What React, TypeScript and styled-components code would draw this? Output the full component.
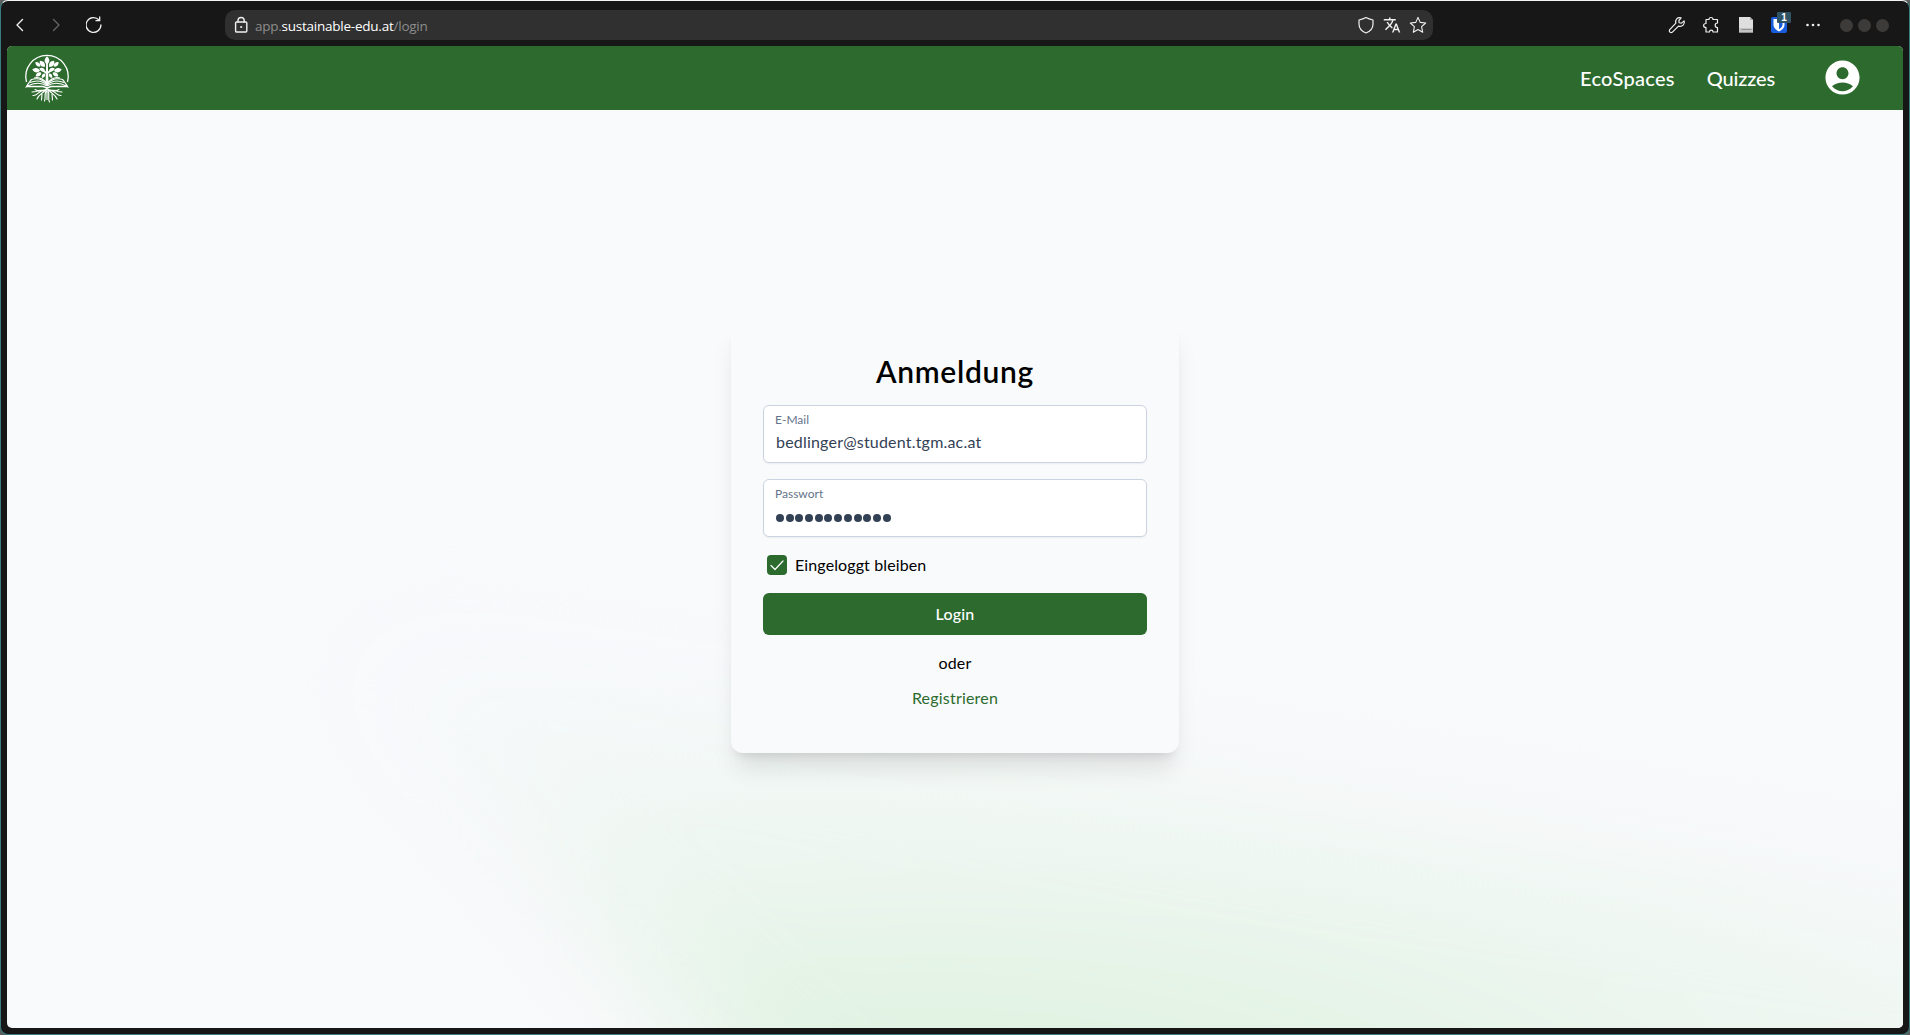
import React from 'react';
import styled, { createGlobalStyle } from 'styled-components';
import { MdAccountCircle, MdTranslate } from 'react-icons/md';

const green = '#2c6a2e';

const GlobalStyle = createGlobalStyle`
  *, *::before, *::after { box-sizing: border-box; }
  html, body, #root { height: 100%; }
  body { margin: 0; background: #5b5f5e; overflow: hidden; font-family: Lato, 'Open Sans', sans-serif; }
  svg { display: block; flex: none; }
`;

const BrowserWindow = styled.div`
  height: 100vh;
  display: flex;
  flex-direction: column;
  padding: 0 6px 6px;
  background: #171717;
  border: 1px solid #3b7d7e;
  border-top-color: #f4f6f6;
  border-radius: 8px;
`;

const Toolbar = styled.div`
  height: 45px;
  flex: none;
  display: flex;
  align-items: center;
  padding: 3px 14px 0 7px;
  color: #f0f0f0;
`;

const NavButtons = styled.div`
  width: 211px;
  display: flex;
  align-items: center;
  gap: 20px;
`;

const AddressBar = styled.div`
  width: 1208px;
  height: 30px;
  display: flex;
  align-items: center;
  padding: 0 6px 0 8px;
  border-radius: 10px;
  background: #303030;
`;

const Url = styled.div`
  flex: 1;
  margin-left: 6px;
  padding-top: 2px;
  font: 13.5px/20px 'Open Sans', 'Noto Sans', sans-serif;
  letter-spacing: -0.24px;
  color: #8d8d8d;
  b { font-weight: 400; color: #fff; }
`;

const AddressActions = styled.div`
  display: flex;
  gap: 8px;
`;

const Extensions = styled.div`
  margin-left: auto;
  display: flex;
  align-items: center;
  gap: 16px;
`;

const VaultIcon = styled.div`
  position: relative;
`;

const Badge = styled.span`
  position: absolute;
  left: 7px;
  top: -4px;
  width: 14px;
  height: 11px;
  background: #2f5365;
  border-radius: 1px;
  color: #fff;
  font: 700 10px/11px 'Liberation Sans', sans-serif;
  text-align: center;
`;

const WindowControls = styled.div`
  display: flex;
  gap: 5px;
  margin-left: 2px;
  padding-top: 1px;
`;

const Control = styled.span`
  width: 13px;
  height: 13px;
  border-radius: 50%;
  background: #3d3b39;
`;

const Page = styled.div`
  position: relative;
  flex: 1;
  min-height: 0;
  display: flex;
  flex-direction: column;
  overflow: hidden;
  border-radius: 5px;
  background: #f9fafc;
`;

const Header = styled.header`
  height: 64px;
  flex: none;
  display: flex;
  align-items: center;
  justify-content: space-between;
  padding: 0 40px 2px 16px;
  background: ${green};
  color: #fff;
`;

const Menu = styled.nav`
  display: flex;
  align-items: center;
`;

const MenuLink = styled.a<{ $spacing: string; $gap: number }>`
  font-size: 20px;
  line-height: 28px;
  font-weight: 500;
  letter-spacing: ${p => p.$spacing};
  margin-right: ${p => p.$gap}px;
  padding-top: 2px;
`;

const Glow = styled.div`
  position: absolute;
  inset: 0;
  filter: blur(56px);
  pointer-events: none;
  &::before {
    content: '';
    position: absolute;
    left: 0;
    top: 500px;
    width: 2100px;
    height: 700px;
    clip-path: polygon(340px 110px, 510px 120px, 2100px 380px, 2100px 700px, 870px 700px);
    background: radial-gradient(ellipse 1650px 520px at 930px 590px, #d9f0da 0%, #e3f3e5 26%, #f0f7f3 62%, #f5f9fa 90%);
  }
`;

const Main = styled.main`
  position: relative;
  flex: 1;
  display: flex;
  justify-content: center;
  align-items: flex-start;
  padding-top: 210px;
`;

const Card = styled.form`
  width: 448px;
  height: 433px;
  display: flex;
  flex-direction: column;
  padding: 31px 32px 32px;
  border-radius: 12px;
  background: #f9fafc;
  box-shadow: 0 20px 25px -5px rgba(0, 0, 0, 0.1), 0 8px 10px -6px rgba(0, 0, 0, 0.1);
`;

const Title = styled.h1`
  margin: 0 0 14px;
  font-size: 30px;
  line-height: 40px;
  font-weight: 600;
  letter-spacing: 0.7px;
  text-align: center;
  color: #000;
`;

const Field = styled.label`
  height: 58px;
  margin-bottom: 16px;
  padding: 6px 11px 0;
  display: flex;
  flex-direction: column;
  border: 1px solid #cbd5e1;
  border-radius: 6px;
  background: #fff;
  box-shadow: 0 1px 2px rgba(0, 0, 0, 0.06);
`;

const FieldLabel = styled.span`
  font-size: 12px;
  line-height: 16px;
  color: #64748b;
`;

const FieldValue = styled.span`
  padding: 2px 0 0 1px;
  font-size: 16px;
  line-height: 24px;
  letter-spacing: 0.2px;
  color: #334155;
`;

const Dots = styled.span`
  display: flex;
  gap: 1.7px;
  padding: 12px 0 0 1px;
`;

const Dot = styled.i`
  width: 8px;
  height: 8px;
  border-radius: 50%;
  background: #334155;
`;

const Remember = styled.label`
  display: flex;
  align-items: center;
  gap: 8px;
  height: 24px;
  margin: 0 0 16px 4px;
  font-size: 16px;
  line-height: 24px;
  letter-spacing: 0.12px;
  color: #000;
`;

const CheckBox = styled.span`
  width: 20px;
  height: 20px;
  display: grid;
  place-items: center;
  border-radius: 4px;
  background: ${green};
`;

const Submit = styled.button`
  height: 42px;
  padding: 0;
  border: 0;
  border-radius: 6px;
  background: ${green};
  color: #fff;
  font: 500 16px/24px Lato, sans-serif;
  letter-spacing: 0.2px;
`;

const Line = styled.p<{ $top: number; $color: string }>`
  margin: ${p => p.$top}px 0 0;
  font-size: 16px;
  line-height: 24px;
  letter-spacing: 0.2px;
  text-align: center;
  color: ${p => p.$color};
`;

const stroke = { fill: 'none', stroke: 'currentColor', strokeLinecap: 'round', strokeLinejoin: 'round' } as const;

const Leaf = ({ x, y, r, s = 1 }: { x: number; y: number; r: number; s?: number }) => (
  <path transform={`translate(${x} ${y}) rotate(${r}) scale(${s * 1.12})`} d="M0 0C-2.8-2-2.5-4.7 0-7C2.5-4.7 2.8-2 0 0Z" />
);

const Logo = () => (
  <svg width="48" height="52" viewBox="0 0 48 52" fill="#fff">
    <path d="M3.500 31A21.200 21.200 0 1 1 44.500 31" fill="none" stroke="#fff" strokeWidth="1.300" />
    <Leaf x={24} y={13.5} r={0} s={1.05} />
    <Leaf x={21.7} y={16} r={-38} />
    <Leaf x={26.3} y={16} r={38} />
    <Leaf x={17.3} y={15.5} r={-48} s={0.85} />
    <Leaf x={30.7} y={15.5} r={48} s={0.85} />
    <Leaf x={17} y={19.8} r={-80} />
    <Leaf x={31} y={19.8} r={80} />
    <Leaf x={22} y={20} r={-65} s={0.8} />
    <Leaf x={26} y={20} r={65} s={0.8} />
    <Leaf x={18.3} y={21.7} r={-122} s={0.85} />
    <Leaf x={29.7} y={21.7} r={122} s={0.85} />
    <Leaf x={22} y={22.5} r={-145} s={0.7} />
    <Leaf x={26} y={22.5} r={145} s={0.7} />
    <path d="M23.200 11h1.600l.7 22.500h-3zM24 23.500l-7-5 .5-.8L24 21l6.500-3.600.5.8z" />
    <g fill="none" stroke="#fff" strokeWidth="1.100">
      <path d="M24 35C18 31 11 31.500 3.500 35.500C6 31.500 7.500 29.500 8.500 28.500C15 26.500 20 28.500 24 33.500C28 28.500 33 26.500 39.500 28.500C40.500 29.500 42 31.500 44.500 35.500C37 31.500 30 31 24 35" />
      <path d="M7 31.500C14 28.500 20 30.500 24 34C28 30.500 34 28.500 41 31.500M11 27C17 25.500 21 28.500 24 32.500C27 28.500 31 25.500 37 27" />
      <path d="M3 35.500H20L24 37L28 35.500H45" strokeWidth="1.400" />
    </g>
    <g fill="none" stroke="#fff" strokeWidth="1.150" strokeLinecap="round">
      <path d="M24 37V48.500M23.500 38C20 41 17 38 13 40.500L9 41M19 40C15 41 14 45 10 44.500M22.500 39C19 43 16 43 14 48M19 43L18.500 49M23 40C21 45 23 46 21.500 50" />
      <path d="M24.500 38C28 41 31 38 35 40.500L39 41M29 40C33 41 34 45 38 44.500M25.500 39C29 43 32 43 34 48M29 43L29.500 49M25 40C27 45 24.500 47 26.500 51M15.500 40L12 38.500M32.500 40L36 38.500" />
    </g>
  </svg>
);

const App = () => (
  <>
    <GlobalStyle />
    <BrowserWindow>
      <Toolbar>
        <NavButtons>
          <svg width="16" height="16" viewBox="0 0 16 16" {...stroke} strokeWidth="1.400"><path d="M8.500 2.500L3 8L8.500 13.500" /></svg>
          <svg width="16" height="16" viewBox="0 0 16 16" {...stroke} stroke="#666" strokeWidth="1.300"><path d="M3.500 2.500L9 8L3.500 13.500" /></svg>
          <svg width="18" height="18" viewBox="0 0 18 18" {...stroke} strokeWidth="1.300"><path d="M13 4A7.400 7.400 0 1 0 14.900 9M13.700 1V4.700H10" /></svg>
        </NavButtons>
        <AddressBar>
          <svg width="16" height="18" viewBox="0 0 16 18" {...stroke} strokeWidth="1.400"><rect x="2.600" y="6" width="11.200" height="10" rx="1" /><path d="M5 6V4.600a3.100 3.100 0 0 1 6.200 0V6" /><circle cx="8.200" cy="11" r=".4" fill="currentColor" /></svg>
          <Url>app.<b>sustainable-edu.at</b>/login</Url>
          <AddressActions>
            <svg width="18" height="18" viewBox="0 0 18 18" {...stroke} strokeWidth="1.200"><path d="M9 1.500C6.500 2.800 4.500 3.400 2 4V8C2 12.500 4.500 15.200 9 17C13.500 15.200 16 12.500 16 8V4C13.500 3.400 11.500 2.800 9 1.500Z" /></svg>
            <MdTranslate size={18} />
            <svg width="18" height="18" viewBox="0 0 18 18" {...stroke} strokeWidth="1.100"><path d="M9 1.400L11.200 6.400L16.700 7L12.600 10.700L13.700 16.300L9 13.500L4.300 16.300L5.400 10.700L1.300 7L6.800 6.400Z" /></svg>
          </AddressActions>
        </AddressBar>
        <Extensions>
          <svg width="18" height="18" viewBox="0 0 24 24" {...stroke} strokeWidth="1.600"><path d="M21.500 6.500L18 9.500L14.800 9L14.500 6L17.500 2.500C12.500 1 9 5 10.500 9.500L2 18.500C1 21 3.500 23 5.500 21.800L14 13.500C19 15 23 11 21.500 6.500Z" /></svg>
          <svg width="18" height="18" viewBox="0 0 18 18" {...stroke} strokeWidth="1.200"><path d="M4 3.500H7C7 .8 11 .8 11 3.500H15.500V7C12.400 7 12.400 11.500 15.500 11.500V16H11C11 13.500 7.500 13.500 7.500 16H4V11.500C.8 11.500.8 7.500 4 7.500Z" /></svg>
          <svg width="18" height="18" viewBox="0 0 18 18"><path d="M3 1H14L17 4V17H3Z" fill="#dedede" /><path d="M14 1V4H17Z" fill="#a9a9a9" /><path d="M3 12H17V17H3Z" fill="#c4c4c4" /><path d="M5.500 13.500H15.500M3 16.500H17" stroke="#8f8f8f" /></svg>
          <VaultIcon>
            <svg width="18" height="18" viewBox="0 0 18 18"><rect x="1" y="1" width="16" height="16" rx="2" fill="#175ddc" /><path d="M3.500 3H14.500V9C14.500 12 12 14 9 15.500C6 14 3.500 12 3.500 9Z" fill="#fff" /><path d="M9 5H12.500V9C12.500 10.500 11 12 9 13.200Z" fill="#175ddc" /></svg>
            <Badge>1</Badge>
          </VaultIcon>
          <svg width="18" height="18" viewBox="0 0 18 18" fill="currentColor"><circle cx="3.500" cy="9" r="1.300" /><circle cx="9" cy="9" r="1.300" /><circle cx="14.500" cy="9" r="1.300" /></svg>
          <WindowControls><Control /><Control /><Control /></WindowControls>
        </Extensions>
      </Toolbar>
      <Page>
        <Header>
          <Logo />
          <Menu>
            <MenuLink $spacing="0.3px" $gap={32}>EcoSpaces</MenuLink>
            <MenuLink $spacing="-0.15px" $gap={47}>Quizzes</MenuLink>
            <MdAccountCircle size={41} />
          </Menu>
        </Header>
        <Glow />
        <Main>
          <Card>
            <Title>Anmeldung</Title>
            <Field>
              <FieldLabel>E-Mail</FieldLabel>
              <FieldValue>bedlinger@student.tgm.ac.at</FieldValue>
            </Field>
            <Field>
              <FieldLabel>Passwort</FieldLabel>
              <Dots>{Array.from({ length: 12 }, (_, i) => <Dot key={i} />)}</Dots>
            </Field>
            <Remember>
              <CheckBox>
                <svg width="14" height="14" viewBox="0 0 14 14" fill="none" stroke="#fff" strokeWidth="1.200" strokeLinecap="round" strokeLinejoin="round"><path d="M1 7.500L5 11.500L13 3" /></svg>
              </CheckBox>
              Eingeloggt bleiben
            </Remember>
            <Submit type="button">Login</Submit>
            <Line $top={16} $color="#000">oder</Line>
            <Line $top={11} $color={green}>Registrieren</Line>
          </Card>
        </Main>
      </Page>
    </BrowserWindow>
  </>
);

export default App;
